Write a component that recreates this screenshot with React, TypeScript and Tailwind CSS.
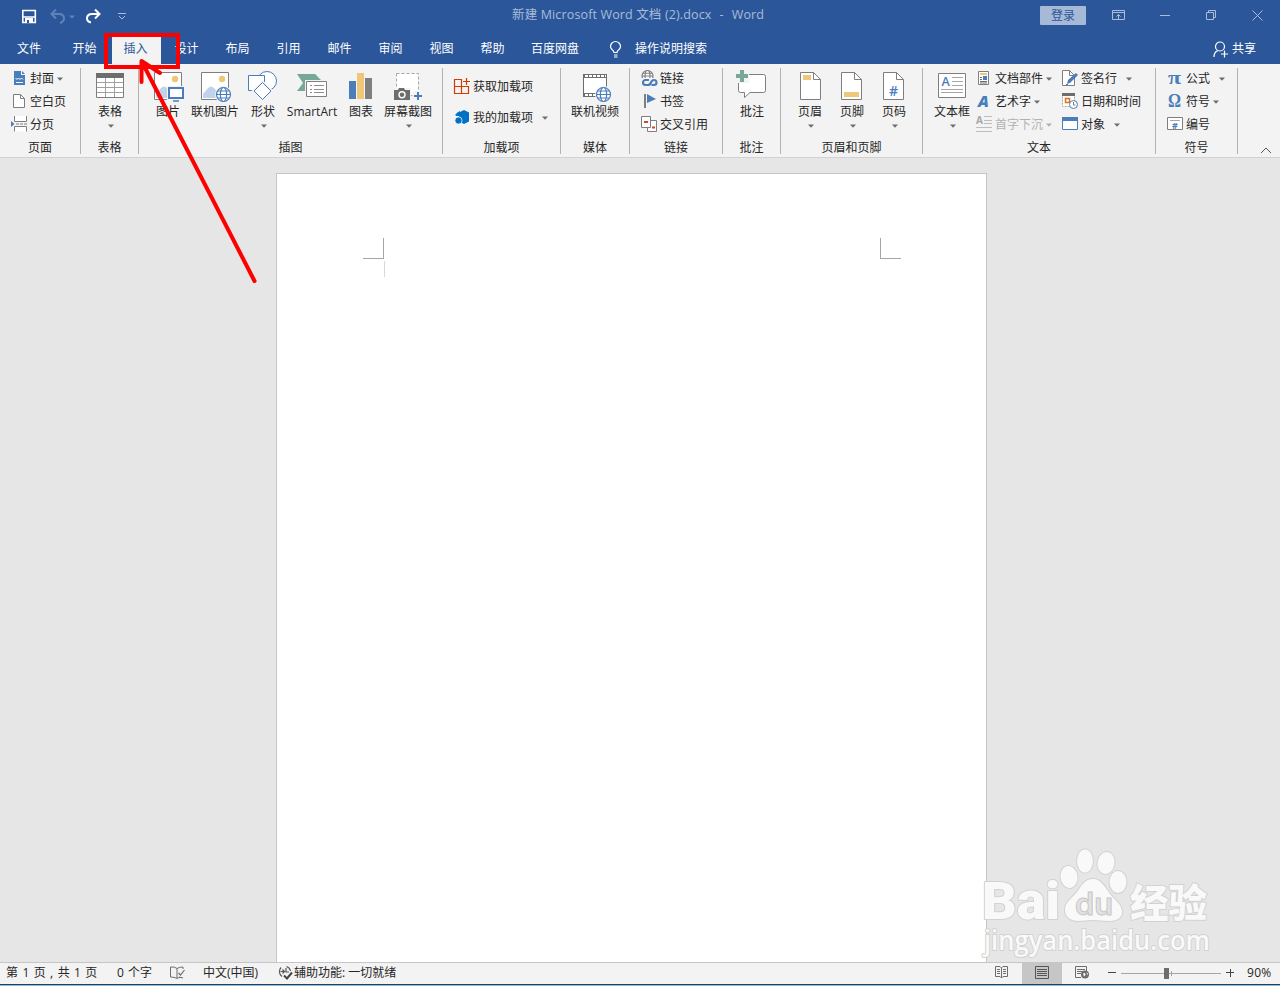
import type { ReactNode } from "react";
import clsx from "clsx";

const BLUE = "#4a7ebb";
const GRAY = "#7f7f7f";
const GOLD = "#f0c778";
const GREEN = "#76a797";

type IconProps = { children: ReactNode; w?: number; h?: number; className?: string };

const Svg = ({ children, w = 32, h = 32, className }: IconProps) => (
  <svg width={w} height={h} viewBox={`0 0 ${w} ${h}`} fill="none" className={clsx("block flex-none overflow-visible", className)}>
    {children}
  </svg>
);

const Small = ({ children }: { children: ReactNode }) => (
  <Svg w={18} h={17}>{children}</Svg>
);

const Arrow = ({ className }: { className?: string }) => (
  <Svg w={6} h={4} className={className}>
    <path d="M0 .5h6L3 3.7z" fill="currentColor" />
  </Svg>
);

const Globe = ({ x, y, r = 7, color = BLUE }: { x: number; y: number; r?: number; color?: string }) => (
  <g stroke={color} strokeWidth="1.2" fill="#fff">
    <circle cx={x} cy={y} r={r} />
    <ellipse cx={x} cy={y} rx={r * 0.45} ry={r} />
    <path d={`M${x - r} ${y}h${2 * r}M${x - r * 0.85} ${y - r / 2}h${r * 1.7}M${x - r * 0.85} ${y + r / 2}h${r * 1.7}`} />
  </g>
);

const Photo = () => (
  <>
    <path d="M2.5 2.5h27v27h-27z" fill="#fff" stroke={GRAY} />
    <circle cx="23" cy="9" r="3.2" fill={GOLD} />
    <path d="M4 28v-4l5-6q3-3 6 0l6 7v3z" fill="#c1d3e8" />
  </>
);

const Sheet = ({ x = 5, children }: { x?: number; children: ReactNode }) => (
  <Svg>
    <path d={`M${x + 0.5} 2.5h13l7 7v20h-20z`} fill="#fff" stroke={GRAY} />
    <path d={`M${x + 13.5} 2.5v7h7`} stroke={GRAY} />
    {children}
  </Svg>
);

const TableIcon = () => (
  <Svg>
    <path d="M2.5 3.5h27v24h-27z" fill="#fff" stroke={GRAY} />
    <path d="M2 3h28v5H2z" fill="#6d6d6d" />
    <path d="M3 12.5h26M3 17.5h26M3 22.5h26M11.5 8v19M20.5 8v19" stroke="#a0a0a0" />
  </Svg>
);

const PictureIcon = () => (
  <Svg>
    <Photo />
    <path d="M15 16h18v14H15z" fill="#f3f3f3" />
    <path d="M17 18h14v10H17z" fill="#fff" stroke={BLUE} strokeWidth="2" />
    <path d="M21 31h6" stroke={BLUE} strokeWidth="1.5" />
  </Svg>
);

const OnlinePictureIcon = () => (
  <Svg>
    <Photo />
    <circle cx="24.5" cy="24.5" r="8.5" fill="#f3f3f3" />
    <Globe x={24.5} y={24.5} />
  </Svg>
);

const ShapesIcon = () => (
  <Svg>
    <circle cx="20" cy="11" r="9.5" fill="#fff" stroke={BLUE} />
    <path d="M1.5 5.5h16v15h-16z" fill="#fff" stroke={BLUE} />
    <path d="M15.5 12l9 9-9 9-9-9z" fill="#fff" stroke="#f3f3f3" strokeWidth="3" />
    <path d="M15.5 12.5l8.5 8.5-8.5 8.5L7 21z" fill="#fff" stroke={BLUE} />
  </Svg>
);

const SmartArtIcon = () => (
  <Svg>
    <path d="M1 4h18l6 8H10v9H1l6-8z" fill={GREEN} />
    <path d="M9 10h23v18H9z" fill="#f3f3f3" />
    <path d="M19 4l6 6H9V4z" fill={GREEN} />
    <path d="M10.5 11.5h20v15h-20z" fill="#fff" stroke={GRAY} />
    <path d="M14 15.5h2M14 19.5h2M14 22.5h2M18 15.5h10M18 19.5h10M18 22.5h10" stroke="#8f8f8f" />
  </Svg>
);

const ChartIcon = () => (
  <Svg>
    <path d="M4 11h7v18H4z" fill={BLUE} />
    <path d="M12 3h7v26h-7z" fill={GOLD} />
    <path d="M20 8h7v21h-7z" fill={GRAY} />
  </Svg>
);

const ScreenshotIcon = () => (
  <Svg>
    <path d="M4.5 3.5h22v22h-22z" fill="#fff" stroke="#a6a6a6" strokeDasharray="3 2" />
    <path d="M1 18h18v13H1z" fill="#f3f3f3" />
    <path d="M2 20h4l1-2h5l1 2h5v10H2z" fill="#6d6d6d" />
    <circle cx="10" cy="24.8" r="3" fill="#6d6d6d" stroke="#fff" strokeWidth="1.4" />
    <path d="M21 21h10v10H21z" fill="#f3f3f3" />
    <path d="M22 26h8M26 22v8" stroke={BLUE} strokeWidth="2" />
  </Svg>
);

const VideoIcon = () => (
  <Svg>
    <path d="M4.5 4.5h23v22h-23z" fill="#fff" stroke="#6d6d6d" />
    <path d="M4 6h24M4 25h24" stroke="#6d6d6d" strokeWidth="4" />
    <path d="M6 6h21M6 25h21" stroke="#fff" strokeWidth="2" strokeDasharray="3 1" />
    <circle cx="24.5" cy="24.5" r="8.5" fill="#f3f3f3" />
    <Globe x={24.5} y={24.5} />
  </Svg>
);

const CommentIcon = () => (
  <Svg>
    <path d="M4.5 4.5h23q2 0 2 2v14q0 2-2 2H14l-5.5 5v-5h-4q-2 0-2-2v-14q0-2 2-2z" fill="#fff" stroke={GRAY} />
    <path d="M0 0h13v13H0z" fill="#f3f3f3" />
    <path d="M0 6h12M6 0v12" stroke={GREEN} strokeWidth="4" />
  </Svg>
);

const TextBoxIcon = () => (
  <Svg>
    <path d="M2.5 3.5h27v24h-27z" fill="#fff" stroke={GRAY} />
    <text x="5.5" y="16" fontSize="12.5" fontWeight="600" fill={BLUE}>A</text>
    <path d="M16 7.5h11M16 11.5h11M16 15.5h11M5 19.5h22M5 22.5h22" stroke="#a6a6a6" />
  </Svg>
);

const CoverIcon = () => (
  <Small>
    <path d="M3 1h7v4h4v10H3z" fill={BLUE} />
    <path d="M11 1l3 3h-3z" fill={BLUE} />
    <path d="M4.5 8L6 9.5 7.500 8 9 9.500 10.500 8 12 9.500M5 12.500h7" stroke="#fff" />
  </Small>
);

const BlankIcon = () => (
  <Small>
    <path d="M2.5 1.5h7l4 4v9h-11z" fill="#fff" stroke={GRAY} />
    <path d="M9.5 1.5v4h4" stroke={GRAY} />
  </Small>
);

const BreakIcon = () => (
  <Small>
    <path d="M3.5 0v5.5h12V0M3.5 15.5v-5h12v5" fill="#fff" stroke={GRAY} />
    <path d="M5 8h11" stroke={GRAY} strokeDasharray="3 1" />
    <path d="M0 5l3.5 3L0 11z" fill={BLUE} />
  </Small>
);

const LinkIcon = () => (
  <Small>
    <Globe x={6.5} y={6} r={5.5} color={GRAY} />
    <path d="M1 8h16v9H1z" fill="#f3f3f3" />
    <path d="M8 10H4.5a2.5 2.5 0 000 5H7q2 0 3-2.5T13 10a2.5 2.5 0 010 5h-2.5" stroke={BLUE} strokeWidth="2.2" />
  </Small>
);

const BookmarkIcon = () => (
  <Small>
    <path d="M4 1v14" stroke={GRAY} strokeWidth="2" />
    <path d="M6 1l9 5-9 4z" fill={BLUE} />
  </Small>
);

const CrossRefIcon = () => (
  <Small>
    <path d="M6.5 4.5h9v11h-9z" fill="#fff" stroke={GRAY} />
    <path d="M.5.5h9v11h-9z" fill="#fff" stroke={GRAY} />
    <path d="M3 6h4M11 11.5h3" stroke="#d9451f" strokeWidth="2" />
  </Small>
);

const GetAddinsIcon = () => (
  <Small>
    <path d="M.5 1.5h7v7h-7zM.5 8.5h7v7h-7zM7.5 8.5h7v7h-7zM12.5 0v7M9 3.5h7" stroke="#d83b01" strokeWidth="1.2" />
  </Small>
);

const MyAddinsIcon = () => (
  <Small>
    <path d="M10 1l5 2.5v9L10 15l-5-2.5v-9z" fill="#0072c6" />
    <path d="M3.5 3.5L6 2v5H2.500L1 6z" fill="#0072c6" />
    <circle cx="4.5" cy="11.5" r="3.6" fill="#0072c6" stroke="#f3f3f3" strokeWidth="0.8" />
  </Small>
);

const QuickPartsIcon = () => (
  <Small>
    <path d="M2.5 1.5h10v13h-10z" fill="#fff" stroke={GRAY} />
    <path d="M4 4h7" stroke={GOLD} strokeWidth="2" />
    <path d="M4 7.5h2M4 9.5h2M4 11.5h7M4 13h7" stroke="#6d6d6d" />
    <path d="M7 6h4v4H7z" fill={BLUE} />
  </Small>
);

const WordArtIcon = () => (
  <Small>
    <text x="2" y="14" fontSize="16" fontWeight="800" fontStyle="italic" fill={BLUE}>A</text>
  </Small>
);

const DropCapIcon = () => (
  <Small>
    <text x="0" y="8" fontSize="10" fontWeight="700" fill="#a6a6a6">A</text>
    <path d="M8 .5h8M8 4.5h8M8 7.5h8M0 11.5h16M0 15.5h16" stroke="#bdbdbd" />
  </Small>
);

const SignatureIcon = () => (
  <Small>
    <path d="M.5.5h7l5 5v10H.5z" fill="#fff" stroke={GRAY} />
    <path d="M7.5.5v5h5" stroke={GRAY} />
    <path d="M5 14l1-4 8-7 2 2-8 8z" fill={BLUE} />
    <path d="M4 14.5h2" stroke={BLUE} />
  </Small>
);

const DateIcon = () => (
  <Small>
    <path d="M.5.5h12v13H.5z" fill="#fff" stroke="#a6a6a6" strokeDasharray="2 1" />
    <path d="M0 0h13v3H0z" fill="#6d6d6d" />
    <path d="M3.5 5.5h4v4h-4z" stroke="#e07020" strokeWidth="1.5" />
    <circle cx="11.5" cy="11.5" r="4" fill="#fff" stroke={BLUE} />
    <path d="M11.5 9v3h2" stroke={GRAY} />
  </Small>
);

const ObjectIcon = () => (
  <Small>
    <path d="M.5 1.5h15v12H.5z" fill="#fff" stroke={BLUE} />
    <path d="M0 1h16v4H0z" fill={BLUE} />
  </Small>
);

const Glyph = ({ char }: { char: string }) => (
  <Small>
    <text
      x="7.5"
      y="14"
      fontSize="19"
      fontWeight="700"
      textAnchor="middle"
      fill={BLUE}
      fontFamily="Liberation Serif, serif"
      textLength="13"
      lengthAdjust="spacingAndGlyphs"
    >
      {char}
    </text>
  </Small>
);

const NumberIcon = () => (
  <Small>
    <path d="M.5 1.5h15v12H.5z" fill="#fff" stroke={GRAY} />
    <path d="M3 4.5h10" stroke="#a6a6a6" />
    <text x="8" y="12.5" fontSize="9" fontWeight="700" textAnchor="middle" fill={BLUE}>#</text>
  </Small>
);

type BigProps = { icon: ReactNode; label: string; menu?: boolean; className: string };

const Big = ({ icon, label, menu, className }: BigProps) => (
  <button className={clsx("flex flex-none flex-col items-center pt-1.5", className)}>
    {icon}
    <span className="mt-0.5 leading-4 whitespace-nowrap">{label}</span>
    {menu && <Arrow className="mt-1 ml-0.5 text-[#6d6d6d]" />}
  </button>
);

type RowProps = { icon: ReactNode; label: string; arrow?: string; disabled?: boolean };

const Row = ({ icon, label, arrow, disabled }: RowProps) => (
  <button className={clsx("flex h-[23px] items-center gap-px whitespace-nowrap", disabled && "text-[#b1b1b1]")}>
    {icon}
    <span className="leading-4">{label}</span>
    {arrow && <Arrow className={clsx(arrow, disabled ? "text-[#b1b1b1]" : "text-[#6d6d6d]")} />}
  </button>
);

const Column = ({ children, className }: { children: ReactNode; className?: string }) => (
  <div className={clsx("flex flex-none flex-col items-start", className)}>{children}</div>
);

const Group = ({ label, className, children }: { label: string; className: string; children: ReactNode }) => (
  <section className="flex flex-none">
    <div className={clsx("flex flex-col", className)}>
      <div className="flex h-19">{children}</div>
      <div className="text-center leading-4">{label}</div>
    </div>
    <div className="mt-1 h-[86px] w-px bg-[#b3b3b3]" />
  </section>
);

const Ribbon = () => (
  <div className="flex h-[94px] flex-none border-b border-[#d2d2d2] bg-[#f3f3f3] text-[#262626]">
    <Group label="页面" className="w-20">
      <Column className="pt-[3px] pl-[11px]">
        <Row icon={<CoverIcon />} label="封面" arrow="ml-0.5" />
        <Row icon={<BlankIcon />} label="空白页" />
        <Row icon={<BreakIcon />} label="分页" />
      </Column>
    </Group>
    <Group label="表格" className="w-[57px]">
      <Big icon={<TableIcon />} label="表格" menu className="ml-px w-14" />
    </Group>
    <Group label="插图" className="w-[303px]">
      <Big icon={<PictureIcon />} label="图片" className="ml-[9px] w-10" />
      <Big icon={<OnlinePictureIcon />} label="联机图片" className="w-[54px]" />
      <Big icon={<ShapesIcon />} label="形状" menu className="w-[42px]" />
      <Big icon={<SmartArtIcon />} label="SmartArt" className="w-14" />
      <Big icon={<ChartIcon />} label="图表" className="w-[42px]" />
      <Big icon={<ScreenshotIcon />} label="屏幕截图" menu className="w-[52px]" />
    </Group>
    <Group label="加载项" className="w-[117px]">
      <Column className="gap-2 pt-[11px] pl-[11px]">
        <Row icon={<GetAddinsIcon />} label="获取加载项" />
        <Row icon={<MyAddinsIcon />} label="我的加载项" arrow="ml-2" />
      </Column>
    </Group>
    <Group label="媒体" className="w-[68px]">
      <Big icon={<VideoIcon />} label="联机视频" className="w-[68px]" />
    </Group>
    <Group label="链接" className="w-[92px]">
      <Column className="pt-[3px] pl-[11px]">
        <Row icon={<LinkIcon />} label="链接" />
        <Row icon={<BookmarkIcon />} label="书签" />
        <Row icon={<CrossRefIcon />} label="交叉引用" />
      </Column>
    </Group>
    <Group label="批注" className="w-[57px]">
      <Big icon={<CommentIcon />} label="批注" className="ml-px w-14" />
    </Group>
    <Group label="页眉和页脚" className="w-[141px]">
      <Big
        icon={<Sheet x={6}><path d="M9 5h8v5H9z" fill={GOLD} /></Sheet>}
        label="页眉"
        menu
        className="ml-2 w-[42px]"
      />
      <Big
        icon={<Sheet><path d="M8 22h15v5H8z" fill={GOLD} /></Sheet>}
        label="页脚"
        menu
        className="w-[42px]"
      />
      <Big
        icon={
          <Sheet>
            <text x="15.5" y="26" fontSize="14" fontWeight="600" textAnchor="middle" fill={BLUE}>#</text>
          </Sheet>
        }
        label="页码"
        menu
        className="w-[42px]"
      />
    </Group>
    <Group label="文本" className="w-[232px]">
      <Big icon={<TextBoxIcon />} label="文本框" menu className="ml-[7px] w-11" />
      <Column className="w-[86px] pt-[3px] pl-0.5">
        <Row icon={<QuickPartsIcon />} label="文档部件" arrow="ml-0.5" />
        <Row icon={<WordArtIcon />} label="艺术字" arrow="ml-0.5" />
        <Row icon={<DropCapIcon />} label="首字下沉" arrow="ml-0.5" disabled />
      </Column>
      <Column className="pt-[3px] pl-0.5">
        <Row icon={<SignatureIcon />} label="签名行" arrow="ml-2" />
        <Row icon={<DateIcon />} label="日期和时间" />
        <Row icon={<ObjectIcon />} label="对象" arrow="ml-2" />
      </Column>
    </Group>
    <Group label="符号" className="w-[81px]">
      <Column className="pt-[3px] pl-[11px]">
        <Row icon={<Glyph char="π" />} label="公式" arrow="ml-2" />
        <Row icon={<Glyph char="Ω" />} label="符号" arrow="ml-0.5" />
        <Row icon={<NumberIcon />} label="编号" />
      </Column>
    </Group>
    <Svg w={12} h={7} className="mt-[83px] ml-[22px]">
      <path d="M1 6l5-5 5 5" stroke="#555" />
    </Svg>
  </div>
);

const TitleBar = () => (
  <div className="flex h-8 text-[#a9bcd8]">
    <div className="flex w-[512px] items-start pt-2">
      <Svg w={16} h={16} className="ml-[21px]">
        <path d="M1.8 2.5h12.5v12H1.800zM2 9h12" stroke="#fff" strokeWidth="1.6" />
        <path d="M4 10h8v5H4z" fill="#fff" />
        <path d="M6 12h2v3H6z" fill="#2b579a" />
      </Svg>
      <Svg w={16} h={16} className="ml-[13px] text-[#5f82b8]">
        <path d="M6 1.5L1.5 6 6 10.5M2 6h7q5 0 5 4.5 0 3-4 4.5" stroke="currentColor" strokeWidth="2" />
      </Svg>
      <Arrow className="mt-[7px] ml-[3px] text-[#5f82b8]" />
      <Svg w={16} h={16} className="ml-[10px]">
        <path d="M10 1.5L14.500 6 10 10.500M14 6H7Q2 6 2 10.500q0 3 4 4" stroke="#fff" strokeWidth="2" />
      </Svg>
      <Svg w={8} h={8} className="mt-1 ml-[17px]">
        <path d="M0 1.5h8M1 4l3 3 3-3" stroke="#a9bcd8" />
      </Svg>
    </div>
    <div className="w-[260px] pt-[7px] text-[12.5px] leading-4 tracking-[0.14px] whitespace-pre">
      新建 Microsoft Word 文档 (2).docx
      <span className="ml-2">-</span>
      <span className="ml-2">Word</span>
    </div>
    <button className="mt-1.5 ml-[268px] h-[19px] w-[46px] rounded-[1px] bg-[#a6b9d6] leading-[19px] text-[#2b579a]">
      登录
    </button>
    <Svg w={13} h={11} className="mt-2.5 ml-[26px]">
      <path d="M.5.5h12v9H.5zM1 2.5h11M6.5 9V4.500M4.500 6.500l2-2 2 2" stroke="currentColor" />
    </Svg>
    <Svg w={10} h={11} className="mt-2.5 ml-[35px]">
      <path d="M0 5.5h10" stroke="currentColor" />
    </Svg>
    <Svg w={10} h={11} className="mt-2.5 ml-9">
      <path d="M.5 2.5h7v7h-7zM2.500 2.500v-2h7v7h-2" stroke="currentColor" />
    </Svg>
    <Svg w={11} h={11} className="mt-2.5 ml-9">
      <path d="M.5.5l10 10M10.500.5l-10 10" stroke="currentColor" />
    </Svg>
  </div>
);

const tabs = ["开始", "插入", "设计", "布局", "引用", "邮件", "审阅", "视图", "帮助"];

const TabBar = () => (
  <div className="flex h-8 items-end text-white">
    <button className="h-7 w-[59px] pr-px pb-[3px]">文件</button>
    {tabs.map((tab) => (
      <div key={tab} className="w-[51px] pl-0.5">
        <button className={clsx("h-7 w-full pr-0.5 pb-[3px]", tab === "插入" && "bg-[#f3f3f3] text-[#2b579a]")}>
          {tab}
        </button>
      </div>
    ))}
    <button className="ml-[13px] h-7 w-12 pb-[3px] whitespace-nowrap">百度网盘</button>
    <button className="ml-[30px] flex h-7 items-center pb-0.5">
      <Svg w={14} h={17}>
        <path d="M5 11.5Q5 10 3 8.500 1.500 7 1.500 5.500a5 5 0 0110 0Q11.500 7 10 8.500 8 10 8 11.500zM5 14h3.500M5 16h3.500" stroke="#fff" strokeWidth="1.2" />
      </Svg>
      <span className="ml-3">操作说明搜索</span>
    </button>
    <button className="ml-auto flex h-7 items-center pr-6 pb-[3px]">
      <Svg w={16} h={17} className="mt-0.5">
        <circle cx="7" cy="5.5" r="4.5" stroke="#fff" strokeWidth="1.2" />
        <path d="M1 16q0-5 4-6.500M8 13h7M11.500 9.500v7" stroke="#fff" strokeWidth="1.2" />
      </Svg>
      <span className="ml-[3px]">共享</span>
    </button>
  </div>
);

const Document = () => (
  <main className="flex h-[804px] flex-none justify-start overflow-hidden bg-[#e6e6e6] pt-[15px]">
    <div className="ml-[276px] w-[711px] border border-b-0 border-[#c6c6c6] bg-white pt-16">
      <div className="flex justify-between px-[86px]">
        <div>
          <div className="size-[21px] border-r border-b border-[#a6a6a6]" />
          <div className="mt-0.5 ml-[21px] h-4 w-px bg-[#d8d8d8]" />
        </div>
        <div className="-mr-px size-[21px] border-b border-l border-[#a6a6a6]" />
      </div>
    </div>
  </main>
);

const StatusBar = () => (
  <footer className="flex h-[22px] flex-none items-stretch border-t border-[#c6c6c6] bg-[#f3f3f3] pb-0.5 text-[#262626]">
    <div className="flex w-[992px] items-center whitespace-pre">
      <span className="ml-1.5 w-[111px] [word-spacing:1.3px]">第 1 页 , 共 1 页</span>
      <span className="w-[54px] [word-spacing:1px]">0 个字</span>
      <Svg w={15} h={14} className="-ml-px">
        <path d="M7 12V2.500Q5 .5.500 1v10q4 0 6.500 1.500 1-1 3-1M7 2.500Q9 1 13 1v2" stroke="#6d6d6d" />
        <path d="M8.500 7l2 2 4-5M9 11l4 1" stroke="#6d6d6d" strokeWidth="1.2" />
      </Svg>
      <span className="ml-[18px] w-[74px]">中文(中国)</span>
      <Svg w={16} h={15}>
        <path d="M4 2.500a6 6 0 001 9M9.500 1.500a6 6 0 014 4.500M3.500 6.500h3.500M5.500 4.500l2 2-2 2M9 3v4h3" stroke="#555" strokeWidth="1.2" />
        <path d="M7 10.500l3 3 5-6" stroke="#444" strokeWidth="2" />
      </Svg>
      <span className="ml-px">辅助功能: 一切就绪</span>
    </div>
    <div className="flex w-[30px] items-center">
      <Svg w={14} h={13} className="ml-[3px]">
        <path d="M6.500 2L5 .5H.5v10H5l1.500 1.500L8 10.500h4.500V.5H8zM6.500 2v10" stroke="#6d6d6d" />
        <path d="M2 3.500h3M2 5.500h3M2 7.500h3M8 3.500h3M8 5.500h3M8 7.500h3" stroke="#6d6d6d" />
      </Svg>
    </div>
    <div className="-mb-0.5 flex w-10 items-center justify-center bg-[#c6c6c6] pb-0.5">
      <Svg w={14} h={13}>
        <path d="M.5.500h13v12H.5zM2 3.500h10M2 5.500h10M2 7.500h10M2 9.500h10" stroke="#555" />
      </Svg>
    </div>
    <div className="flex flex-1 items-center">
      <Svg w={15} h={13} className="ml-[13px]">
        <path d="M6 11.500H.5V.5h11V5M2 3.500h8M2 5.500h6M2 7.500h4" stroke="#6d6d6d" />
        <circle cx="10" cy="8.5" r="4" fill="#6d6d6d" />
        <path d="M8 7.500l2-.5.5 2-1.500 1.500zM11.500 6l1.500 2-1 1z" fill="#fff" />
      </Svg>
      <Svg w={8} h={9} className="ml-[18px]">
        <path d="M0 4.500h8" stroke="#444" />
      </Svg>
      <Svg w={100} h={12} className="ml-[5px]">
        <path d="M0 6.500h100M50.500 4v5" stroke="#a6a6a6" />
        <path d="M43 1h5v11h-5z" fill="#6d6d6d" />
      </Svg>
      <Svg w={8} h={9} className="ml-[5px]">
        <path d="M0 4.500h8M4.500 1v8" stroke="#444" />
      </Svg>
      <span className="ml-[13px] tracking-[0.3px]">90%</span>
    </div>
  </footer>
);

const Watermark = () => (
  <svg className="absolute top-[840px] left-[976px] overflow-visible" width="244" height="122" viewBox="0 0 244 122">
    <g fill="#f9f9f9" stroke="#d2d2d2" strokeWidth="2" paintOrder="stroke" strokeLinejoin="round">
      <text x="6" y="79" fontSize="51" fontWeight="900" fontFamily="Roboto, sans-serif" textLength="78" lengthAdjust="spacingAndGlyphs">Bai</text>
      <ellipse cx="93" cy="37" rx="8.5" ry="11" transform="rotate(-8 93 37)" />
      <ellipse cx="109" cy="21" rx="8" ry="11.5" />
      <ellipse cx="130" cy="23" rx="8.5" ry="11" transform="rotate(10 130 23)" />
      <ellipse cx="142" cy="42" rx="8.5" ry="11" />
      <path d="M117 39c8 0 12 8 17 15 6 7 12 11 12 18 0 8-8 9-14 9-5 0-9-1-15-1s-10 1-15 1c-7 0-13-4-13-11 0-8 6-11 12-18 5-7 8-13 16-13z" />
      <text x="154" y="77" fontSize="39" fontWeight="900" fontFamily="'Noto Sans CJK SC', sans-serif" textLength="77" lengthAdjust="spacingAndGlyphs">经验</text>
      <text x="8" y="110" fontSize="27" fontWeight="600" fontFamily="'Open Sans', sans-serif" textLength="226" lengthAdjust="spacingAndGlyphs">jingyan.baidu.com</text>
    </g>
    <text x="99" y="75" fontSize="31" fontWeight="600" fontFamily="Inter, sans-serif" fill="#e2e2e2" stroke="#c8c8c8" strokeWidth="1" textLength="38" lengthAdjust="spacingAndGlyphs">du</text>
  </svg>
);

const Annotation = () => (
  <svg className="pointer-events-none absolute top-0 left-0" width="280" height="300" fill="none" stroke="#f00" strokeWidth="4">
    <path d="M106 35h72v32h-72z" />
    <path d="M254.500 281L142 62M141.500 82V61L160 73" strokeLinecap="round" strokeLinejoin="round" />
  </svg>
);

export default function App() {
  return (
    <div className="relative flex h-[986px] w-[1280px] flex-col overflow-hidden font-['Open_Sans','Noto_Sans_CJK_SC',sans-serif] text-[12px]">
      <header className="flex-none bg-[#2b579a]">
        <TitleBar />
        <TabBar />
      </header>
      <Ribbon />
      <Document />
      <StatusBar />
      <div className="h-0.5 flex-none border-t border-[#1f4060] bg-[#8fb8d3]" />
      <Watermark />
      <Annotation />
    </div>
  );
}
